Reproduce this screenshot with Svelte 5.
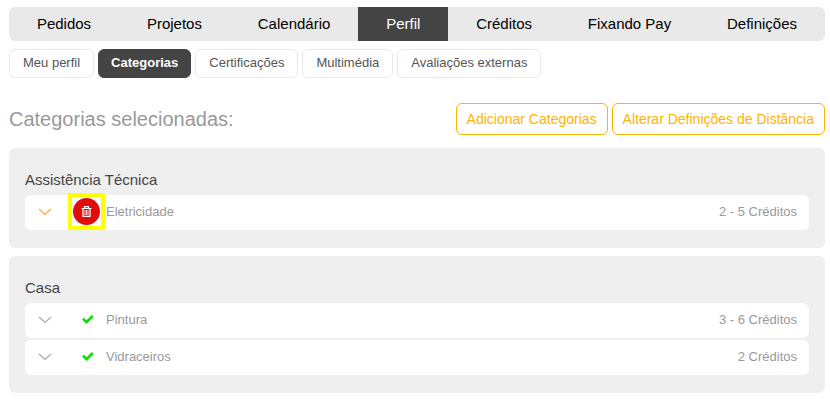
<script lang="ts">
  type Category = { name: string; credits: string; removing?: boolean };
  type Group = { title: string; categories: Category[] };

  const tabs = ["Pedidos", "Projetos", "Calendário", "Perfil", "Créditos", "Fixando Pay", "Definições"];
  const subTabs = ["Meu perfil", "Categorias", "Certificações", "Multimédia", "Avaliações externas"];

  const groups: Group[] = [
    {
      title: "Assistência Técnica",
      categories: [{ name: "Eletricidade", credits: "2 - 5 Créditos", removing: true }],
    },
    {
      title: "Casa",
      categories: [
        { name: "Pintura", credits: "3 - 6 Créditos" },
        { name: "Vidraceiros", credits: "2 Créditos" },
      ],
    },
  ];

  let activeTab = $state("Perfil");
  let activeSubTab = $state("Categorias");
</script>

<div class="page">
  <nav class="tabs">
    {#each tabs as tab (tab)}
      <button class="tab" class:active={tab === activeTab} onclick={() => (activeTab = tab)}>{tab}</button>
    {/each}
  </nav>

  <nav class="sub-tabs">
    {#each subTabs as tab (tab)}
      <button class="sub-tab" class:active={tab === activeSubTab} onclick={() => (activeSubTab = tab)}>{tab}</button>
    {/each}
  </nav>

  <header class="heading">
    <h1>Categorias selecionadas:</h1>
    <div class="actions">
      <button class="action">Adicionar Categorias</button>
      <button class="action">Alterar Definições de Distância</button>
    </div>
  </header>

  {#each groups as group (group.title)}
    <section class="group">
      <h2>{group.title}</h2>
      <ul class="categories">
        {#each group.categories as category (category.name)}
          <li class="category">
            <button class="expand" class:highlighted={category.removing} aria-label="Expandir {category.name}">
              <svg width="14" height="8" viewBox="0 0 14 8" fill="none" stroke="currentColor" stroke-width="1.2">
                <path d="M1 1l6 5.5L13 1" />
              </svg>
            </button>
            <span class="status">
              {#if category.removing}
                <button class="remove" aria-label="Remover {category.name}">
                  <svg width="11" height="11" viewBox="0 0 11 11" fill="none" stroke="currentColor">
                    <path d="M.5 2.5h10M3.5 2.5V.6h4v1.9M2 2.5v7.9h7V2.5" stroke-width="1.2" />
                    <path d="M4 4v5M5.5 4v5M7 4v5" stroke-width="0.8" />
                  </svg>
                </button>
              {:else}
                <svg width="14" height="9" viewBox="-2 0 14 9" fill="#10e010">
                  <path d="M0 4.6L1.9 2.7 4.5 5.2 9.8 0 11.8 1.9 4.5 9z" />
                </svg>
              {/if}
            </span>
            <span class="name">{category.name}</span>
            <span class="credits">{category.credits}</span>
          </li>
        {/each}
      </ul>
    </section>
  {/each}
</div>

<style>
  :global(body) {
    margin: 0;
    background: #fff;
  }

  .page {
    padding: 7px 5px 9px 9px;
    font-family: "Liberation Sans", Arial, sans-serif;
    font-size: 13px;
    color: #444;
  }

  button {
    padding: 0;
    border: none;
    background: none;
    font: inherit;
    color: inherit;
    cursor: pointer;
  }

  svg {
    display: block;
  }

  .tabs {
    display: flex;
    border-radius: 6px;
    background: #e9e9e9;
    overflow: hidden;
  }

  .tab {
    flex: 1 1 auto;
    height: 34px;
    padding: 0 27px 1px;
    font-size: 15px;
    color: #000;
  }

  .tab.active {
    background: #444;
    color: #fff;
  }

  .sub-tabs {
    display: flex;
    flex-wrap: wrap;
    gap: 4px;
    margin-top: 8px;
  }

  .sub-tab {
    height: 29px;
    padding: 0 13px 2px;
    border: 1px solid #e9e9e9;
    border-radius: 6px;
    color: #555;
  }

  .sub-tab.active {
    padding: 0 12px 2px;
    border-color: #444;
    background: #444;
    color: #fff;
    font-weight: bold;
  }

  .heading {
    display: flex;
    align-items: center;
    justify-content: space-between;
    margin: 25px 0 13px;
  }

  h1 {
    margin: 0;
    font-size: 20px;
    font-weight: normal;
    color: #999;
  }

  .actions {
    display: flex;
    gap: 4px;
  }

  .action {
    height: 32px;
    padding: 0 10px;
    border: 1px solid #ffb400;
    border-radius: 6px;
    font-size: 14px;
    color: #ffb400;
  }

  .group {
    padding: 20px 16px 18px;
    border-radius: 6px;
    background: #efefef;
  }

  .group + .group {
    margin-top: 8px;
  }

  h2 {
    margin: 0 0 3px;
    font-size: 15px;
    font-weight: normal;
    line-height: 24px;
  }

  .categories {
    display: flex;
    flex-direction: column;
    gap: 2px;
    margin: 0;
    padding: 0;
    list-style: none;
  }

  .category {
    display: flex;
    align-items: center;
    box-sizing: border-box;
    height: 35px;
    padding: 0 12px 2px 13px;
    border-radius: 6px;
    background: #fff;
    color: #999;
  }

  .expand {
    margin-right: 21px;
    color: #aaa;
  }

  .expand.highlighted {
    color: #ffa928;
  }

  .status {
    display: flex;
    justify-content: center;
    width: 27px;
    margin-right: 6px;
  }

  .remove {
    position: relative;
    display: flex;
    align-items: center;
    justify-content: center;
    width: 27px;
    height: 27px;
    border-radius: 50%;
    background: #e10c0c;
    color: #fff;
  }

  .remove::after {
    content: "";
    position: absolute;
    inset: -5px;
    border: 4px solid #ff0;
    border-radius: 1px;
  }

  .name {
    flex: 1;
  }
</style>
